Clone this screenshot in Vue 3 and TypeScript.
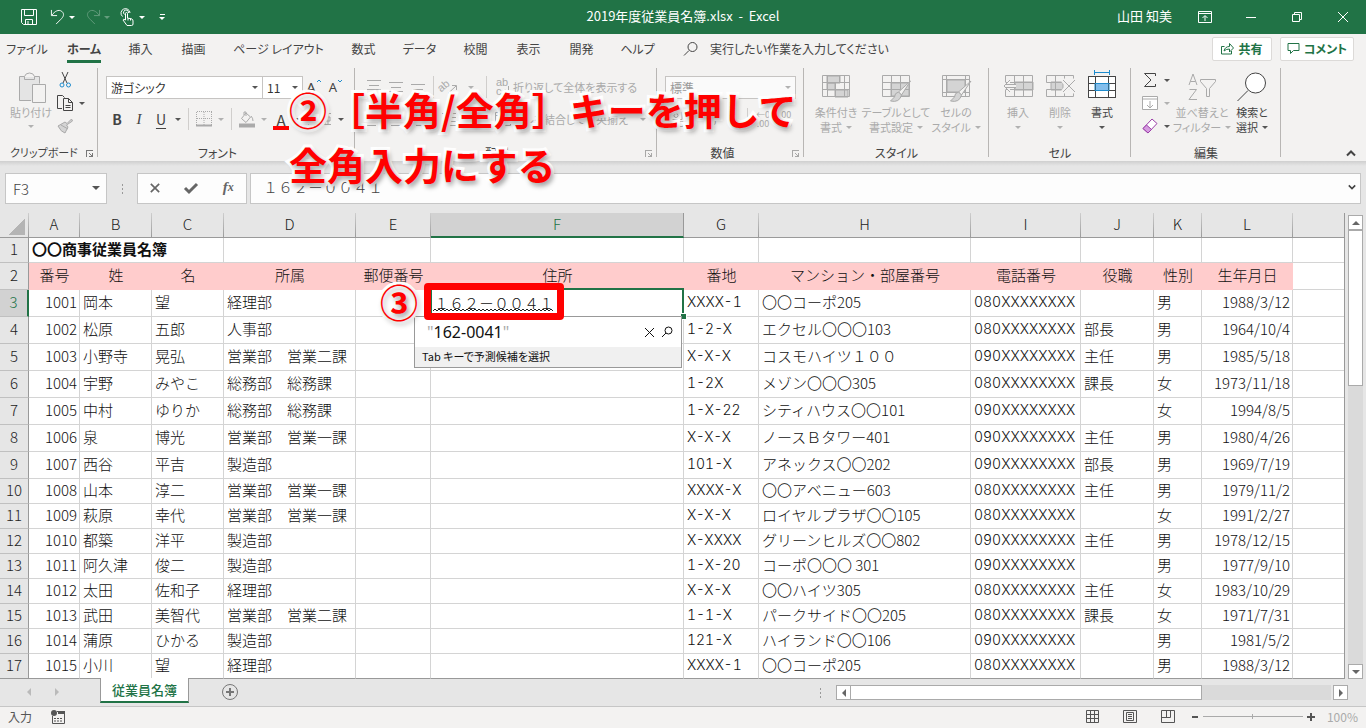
<script setup lang="ts">
import { ref } from 'vue'

interface Tab { label: string; width: number; active?: boolean }
interface Row { n: number; cells: string[] }

const tabs: Tab[] = [
  { label: 'ファイル', width: 54 },
  { label: 'ホーム', width: 60, active: true },
  { label: '挿入', width: 53 },
  { label: '描画', width: 53 },
  { label: 'ページ レイアウト', width: 117 },
  { label: '数式', width: 53 },
  { label: 'データ', width: 59 },
  { label: '校閲', width: 53 },
  { label: '表示', width: 53 },
  { label: '開発', width: 53 },
  { label: 'ヘルプ', width: 59 },
]

const columns = ['A', 'B', 'C', 'D', 'E', 'F', 'G', 'H', 'I', 'J', 'K', 'L', '']
const widths = [51, 72, 72, 132, 75, 253, 75, 212, 110, 73, 48, 91]
const headings = ['番号', '姓', '名', '所属', '郵便番号', '住所', '番地', 'マンション・部屋番号', '電話番号', '役職', '性別', '生年月日']

const source: string[][] = [
  ['1001', '岡本', '望', '経理部', 'XXXX-1', '〇〇コーポ205', '080XXXXXXXX', '', '男', '1988/3/12'],
  ['1002', '松原', '五郎', '人事部', '1-2-X', 'エクセル〇〇〇103', '080XXXXXXXX', '部長', '男', '1964/10/4'],
  ['1003', '小野寺', '晃弘', '営業部　営業二課', 'X-X-X', 'コスモハイツ１００', '090XXXXXXXX', '主任', '男', '1985/5/18'],
  ['1004', '宇野', 'みやこ', '総務部　総務課', '1-2X', 'メゾン〇〇〇305', '080XXXXXXXX', '課長', '女', '1973/11/18'],
  ['1005', '中村', 'ゆりか', '総務部　総務課', '1-X-22', 'シティハウス〇〇101', '090XXXXXXXX', '', '女', '1994/8/5'],
  ['1006', '泉', '博光', '営業部　営業一課', 'X-X-X', 'ノースＢタワー401', '090XXXXXXXX', '主任', '男', '1980/4/26'],
  ['1007', '西谷', '平吉', '製造部', '101-X', 'アネックス〇〇202', '090XXXXXXXX', '部長', '男', '1969/7/19'],
  ['1008', '山本', '淳二', '営業部　営業一課', 'XXXX-X', '〇〇アベニュー603', '080XXXXXXXX', '主任', '男', '1979/11/2'],
  ['1009', '萩原', '幸代', '営業部　営業一課', 'X-X-X', 'ロイヤルプラザ〇〇105', '080XXXXXXXX', '', '女', '1991/2/27'],
  ['1010', '都築', '洋平', '製造部', 'X-XXXX', 'グリーンヒルズ〇〇802', '090XXXXXXXX', '主任', '男', '1978/12/15'],
  ['1011', '阿久津', '俊二', '製造部', '1-X-20', 'コーポ〇〇〇 301', '090XXXXXXXX', '', '男', '1977/9/10'],
  ['1012', '太田', '佐和子', '経理部', 'X-X-X', '〇〇ハイツ305', '080XXXXXXXX', '主任', '女', '1983/10/29'],
  ['1013', '武田', '美智代', '営業部　営業二課', '1-1-X', 'パークサイド〇〇205', '080XXXXXXXX', '課長', '女', '1971/7/31'],
  ['1014', '蒲原', 'ひかる', '製造部', '121-X', 'ハイランド〇〇106', '090XXXXXXXX', '', '男', '1981/5/2'],
  ['1015', '小川', '望', '経理部', 'XXXX-1', '〇〇コーポ205', '080XXXXXXXX', '', '男', '1988/3/12'],
]
const rows: Row[] = source.map((r, i) => ({
  n: i + 3,
  cells: [...r.slice(0, 4), '', '', ...r.slice(4), ''],
}))

const cellText = ref('１６２－００４１')
const nameBox = ref('F3')
const fontName = ref('游ゴシック')
const fontSize = ref('11')
const numberFormat = ref('標準')
const zoom = ref(50)

const wave = 'M0 3' + 'l2 -2l2 2'.repeat(30)
</script>

<template>
  <div class="app">
    <header class="titlebar">
      <div class="quick">
        <button class="qbtn" aria-label="上書き保存">
          <svg width="18" height="18" viewBox="0 0 18 18"><path d="M1.5 1.5h15v15h-13l-2-2zM4.500 1.500v6h9v-6M5.500 16.500v-5h7v5M8 13v3" /></svg>
        </button>
        <button class="qbtn" aria-label="元に戻す">
          <svg width="16" height="18" viewBox="0 0 17 18"><path d="M1.500 1.500v6h6M2 7C5 3 9 .5 12.500 3C16 6 14 9 11.500 11.500L6.500 16.500" /></svg>
        </button>
        <i class="caret light"></i>
        <button class="qbtn dim" aria-label="やり直し">
          <svg width="16" height="18" viewBox="0 0 17 18"><path d="M15.500 1.500v6h-6M15 7C12 3 8 .5 4.500 3C1 6 3 9 5.500 11.500L10.500 16.500" /></svg>
        </button>
        <i class="caret light dim"></i>
        <button class="qbtn touch" aria-label="タッチ/マウス モード">
          <svg width="14" height="18" viewBox="0 0 14 18"><path d="M2.500 8.500A4.500 4.500 0 1 1 10 5M4.500 6.500A2.500 2.500 0 1 1 8.500 5M5.500 12V5.500a1 1 0 0 1 2 0v4.500l4.500 1q1 .5 1 2v3q0 1.500-1.500 1.500H7L3 12q0-1.500 2.500 0M8 10v2.500M10.500 10.500v2" /></svg>
        </button>
        <i class="caret light"></i>
        <button class="qbtn more" aria-label="クイック アクセス ツール バーのユーザー設定"><i class="bar"></i><i class="caret light"></i></button>
      </div>
      <h1 class="doc">2019年度従業員名簿.xlsx&nbsp; -&nbsp; Excel</h1>
      <div class="winctl">
        <span class="user">山田 知美</span>
        <button class="wbtn" aria-label="リボンの表示オプション"><svg width="14" height="12" viewBox="0 0 14 12"><path d="M.5 .5h13v11h-13zM.5 2.500h13M7 10V5M4.500 7L7 4.500L9.500 7" /></svg></button>
        <button class="wbtn" aria-label="最小化"><svg width="12" height="12" viewBox="0 0 12 12"><path d="M1 6.500h10" /></svg></button>
        <button class="wbtn" aria-label="元に戻す"><svg width="12" height="12" viewBox="0 0 12 12"><path d="M1.500 3.500h7v7h-7zM3.500 3.500v-2h7v7h-2" /></svg></button>
        <button class="wbtn" aria-label="閉じる"><svg width="12" height="12" viewBox="0 0 12 12"><path d="M1 1l10 10M11 1L1 11" /></svg></button>
      </div>
    </header>

    <nav class="tabs">
      <button v-for="t in tabs" :key="t.label" class="tab" :class="{ active: t.active }" :style="{ width: t.width + 'px' }"><span>{{ t.label }}</span></button>
      <button class="tell">
        <svg width="16" height="16" viewBox="0 0 16 16"><circle cx="9.500" cy="6" r="4.500" /><path d="M6 9.500L1 14.500" /></svg>
        <span>実行したい作業を入力してください</span>
      </button>
      <button class="pill share">
        <svg width="13" height="13" viewBox="0 0 13 13"><path d="M3.500 4.500h-3v7.500h10v-3M3 9q1-4.500 5.500-4.500v-3l4 4.500l-4 4v-3Q5 7 3 9z" /></svg>共有
      </button>
      <button class="pill comment">
        <svg width="13" height="13" viewBox="0 0 13 13"><path d="M1 1.500h11v7H6.500L3.500 11.500v-3H1z" /></svg>コメント
      </button>
    </nav>

    <div class="ribbon">
      <section class="group clip">
        <div class="body">
          <button class="big off">
            <svg width="30" height="32" viewBox="0 0 30 32"><path class="soft" d="M3 5h21v24H3z" /><path d="M15 28.500H3.500v-24h5q1-3.500 5-3.500t5 3.500h5v7M8.500 4.500v3h10v-3" /><path class="paper" d="M16.500 12.500h13v18h-13z" /></svg>
            <span>貼り付け</span><i class="caret"></i>
          </button>
          <div class="stack">
            <div class="line"><button class="btn" aria-label="切り取り"><svg width="16" height="18" viewBox="0 0 16 18"><path d="M5 1L10 12M11 1L6 12" /><circle class="blue" cx="5" cy="14" r="2" /><circle class="blue" cx="11.500" cy="14" r="2" /></svg></button></div>
            <div class="line"><button class="btn" aria-label="コピー"><svg width="18" height="18" viewBox="0 0 18 18"><path d="M6 14.500H1.500v-13h5l2 2M7.500 4.500h5l4 4v8h-9zM12.500 4.500v4h4M9.500 11.500h5M9.500 13.500h5" /></svg></button><i class="caret wide"></i></div>
            <div class="line"><button class="btn off" aria-label="書式のコピー/貼り付け"><svg width="16" height="16" viewBox="0 0 16 16"><path class="fillsoft" d="M14.500 1L10 5.500L8 4L1 8q3 6 7 7l3-6l-1.500-2L15.500 3z" /><path d="M4 7l7 4" /></svg></button></div>
          </div>
        </div>
        <div class="caption"><span>クリップボード</span><i class="launch"></i></div>
      </section>

      <section class="group font">
        <div class="body rows">
          <div class="line">
            <label class="combo fname"><select v-model="fontName" aria-label="フォント"><option>游ゴシック</option></select><i class="caret"></i></label>
            <label class="combo fsize"><select v-model="fontSize" aria-label="フォント サイズ"><option>11</option></select><i class="caret"></i></label>
            <button class="btn grow" aria-label="フォント サイズの拡大">A<svg width="6" height="6" viewBox="0 0 6 6"><path class="blue" d="M1 4L3 2l2 2" /></svg></button>
            <button class="btn grow small" aria-label="フォント サイズの縮小">A<svg width="6" height="6" viewBox="0 0 6 6"><path class="blue" d="M1 2l2 2L5 2" /></svg></button>
          </div>
          <div class="line">
            <button class="btn bold">B</button><button class="btn ital">I</button><button class="btn under">U</button><i class="caret wide"></i>
            <i class="sep"></i>
            <button class="btn off" aria-label="罫線"><svg width="16" height="16" viewBox="0 0 16 16"><path stroke-dasharray="1 1" d="M.5 1v13M8 1v13M15.500 1v13M1 .5h15M1 7.500h15" /><path d="M0 14.500h16" stroke-width="2" /></svg></button><i class="caret wide off"></i>
            <i class="sep"></i>
            <button class="btn off" aria-label="塗りつぶしの色"><svg width="16" height="17" viewBox="0 0 16 17"><path d="M7 2L2.500 7.500L7 11.500L11.500 6zM5 4V1h2v4M12 5q2 2 2 5" /><path d="M0 14.500h16" stroke-width="4" /></svg></button><i class="caret wide off"></i>
            <button class="btn color" aria-label="フォントの色">A</button><i class="caret wide"></i>
            <i class="sep"></i>
            <button class="btn off kana" aria-label="ふりがなの表示"><svg width="14" height="14" viewBox="0 0 14 14"><path d="M5 1.500h9M5 12.500h9M8 1.500v11M11 1.500v11M6 5v4h7V5z" /></svg></button><i class="caret wide"></i>
          </div>
        </div>
        <div class="caption"><span>フォント</span></div>
      </section>

      <section class="group align">
        <div class="body rows">
          <div class="line">
            <button class="btn off" aria-label="上揃え"><svg width="14" height="16" viewBox="0 0 14 16"><path d="M0 1.500h14M2 6.500h10M0 10.500h14" /></svg></button>
            <button class="btn off" aria-label="上下中央揃え"><svg width="14" height="16" viewBox="0 0 14 16"><path d="M0 3.500h14M2 8.500h10M0 12.500h14" /></svg></button>
            <button class="btn off" aria-label="下揃え"><svg width="14" height="16" viewBox="0 0 14 16"><path d="M0 5.500h14M2 10.500h10M0 14.500h14" /></svg></button>
            <i class="sep"></i>
            <button class="btn off turn" aria-label="方向"><svg width="18" height="16" viewBox="0 0 18 16"><text x="-1" y="10" transform="rotate(-40 5 9)">ab</text><path d="M8 14.500L16 7M12 6.500h4.500V11" /></svg></button><i class="caret turnc off"></i>
            <i class="sep"></i>
            <button class="btn wrap off"><svg width="16" height="18" viewBox="0 0 16 18"><text x="1" y="8">ab</text><text x="1" y="17">c</text><path d="M13.500 8v5h-5M10.500 11l-2 2l2 2" /></svg>折り返して全体を表示する</button>
          </div>
          <div class="line">
            <button class="btn off" aria-label="左揃え"><svg width="14" height="14" viewBox="0 0 14 14"><path d="M0 1.500h14M0 5.500h9M0 9.500h14M0 13.500h9" /></svg></button>
            <button class="btn off" aria-label="中央揃え"><svg width="14" height="14" viewBox="0 0 14 14"><path d="M0 1.500h14M2 5.500h10M0 9.500h14M2 13.500h10" /></svg></button>
            <button class="btn off" aria-label="右揃え"><svg width="14" height="14" viewBox="0 0 14 14"><path d="M0 1.500h14M5 5.500h9M0 9.500h14M5 13.500h9" /></svg></button>
            <i class="sep"></i>
            <button class="btn off" aria-label="インデントを減らす"><svg width="14" height="14" viewBox="0 0 14 14"><path d="M0 1.500h14M6 5.500h8M6 9.500h8M0 13.500h14M4 5L1.500 7.500L4 10" /></svg></button>
            <button class="btn off" aria-label="インデントを増やす"><svg width="14" height="14" viewBox="0 0 14 14"><path d="M0 1.500h14M6 5.500h8M6 9.500h8M0 13.500h14M1 5l2.500 2.500L1 10" /></svg></button>
            <i class="sep"></i>
            <button class="btn wrap off"><svg width="16" height="16" viewBox="0 0 16 16"><path d="M.5 1.500h15v13H.5zM.5 4.500h15M.5 11.500h15M8 1.500v3M8 11.500v3M3 8h10" /></svg>セルを結合して中央揃え</button><i class="caret end off"></i>
          </div>
        </div>
        <div class="caption"><span>配置</span><i class="launch off"></i></div>
      </section>

      <section class="group number">
        <div class="body rows">
          <div class="line"><label class="combo nfmt off"><select v-model="numberFormat" aria-label="表示形式"><option>標準</option></select><i class="caret"></i></label></div>
          <div class="line">
            <button class="btn off" aria-label="通貨表示形式"><svg width="16" height="16" viewBox="0 0 16 16"><path d="M2 .5h12v8H2z" /><circle cx="8" cy="4.500" r="2" /><path d="M6 10.500h9v5H6z" /></svg></button><i class="caret wide off"></i>
            <button class="btn off pct">%</button><button class="btn off pct">,</button>
            <i class="sep"></i>
            <button class="btn off dec">←0<br>.00</button><button class="btn off dec">.00<br>→0</button>
          </div>
        </div>
        <div class="caption"><span>数値</span><i class="launch off"></i></div>
      </section>

      <section class="group styles">
        <div class="body">
          <button class="big off">
            <svg width="30" height="32" viewBox="0 0 30 32"><path class="fillsoft" d="M6 4h13v7H6zM6 11h8v7H6zM14 18h13v7H14z" /><path d="M1.500 3.500h27v21h-27zM1.500 10.500h27M1.500 17.500h27M6.500 3.500v21M23.500 3.500v21M18.500 3.500v7M14.500 10.500v14" /></svg>
            <span>条件付き</span><span>書式<i class="caret"></i></span>
          </button>
          <button class="big off">
            <svg width="30" height="32" viewBox="0 0 30 32"><path class="fillsoft" d="M10 11h18v13H10z" /><path d="M1.500 3.500h27v21h-27zM1.500 10.500h27M1.500 17.500h27M10.500 3.500v21M19.500 3.500v21" /><path class="paper" d="M29.500 9L17.500 20l3 3z" /><path class="fillsoft" d="M17.500 20q-4 1-4 5l-4 4q9 2 11-6z" /></svg>
            <span>テーブルとして</span><span>書式設定<i class="caret"></i></span>
          </button>
          <button class="big off">
            <svg width="30" height="32" viewBox="0 0 30 32"><path class="fillsoft" d="M6 8h18v12H6z" /><path d="M1.500 3.500h27v21h-27zM1.500 7.500h27M1.500 20.500h27M5.500 3.500v21M24.500 3.500v21" /><path class="paper" d="M30 9L17.500 20l3 3z" /><path class="fillsoft" d="M17.500 20q-4 1-4 5l-4 4q9 2 11-6z" /></svg>
            <span>セルの</span><span>スタイル<i class="caret"></i></span>
          </button>
        </div>
        <div class="caption"><span>スタイル</span></div>
      </section>

      <section class="group cellsg">
        <div class="body">
          <button class="big off">
            <svg width="32" height="32" viewBox="0 0 32 32"><path class="fillsoft" d="M13 10h18v8H13z" /><path d="M3.500 10V3.500h27v21h-27V18M3.500 10.500h27M3.500 17.500h27M12.500 3.500v21M21.500 3.500v21" /><path class="paper" d="M8 8l-6 6l6 6v-4h6v-4H8z" stroke="none" /><path d="M14 12.500H4M14 15.500H4M8 8l-6 6l6 6" /></svg>
            <span>挿入</span><span><i class="caret"></i></span>
          </button>
          <button class="big off">
            <svg width="32" height="32" viewBox="0 0 32 32"><path class="fillsoft" d="M7 10h12v8H7z" /><path d="M2.500 10.500v-7h27v7zM2.500 24.500v-7h27v7zM11.500 3.500v21M20.500 3.500v7M20.500 17.500v7" /><path class="halo" d="M19 8l12 12M31 8L19 20" /><path d="M19 8l12 12M31 8L19 20" /></svg>
            <span>削除</span><span><i class="caret"></i></span>
          </button>
          <button class="big">
            <svg width="30" height="32" viewBox="0 0 30 32"><path class="white" d="M1.500 4.500h27v21h-27z" /><path class="cellblue" d="M8 11h14v7H8z" /><path d="M1.500 4.500h27v21h-27zM1.500 11.500h27M1.500 18.500h27M8.500 4.500v21M21.500 4.500v21" /><path class="blue" d="M8 11.500h14v7H8zM7.500 .500h15M7.500 -2v5M22.500 -2v5" /></svg>
            <span>書式</span><span><i class="caret"></i></span>
          </button>
        </div>
        <div class="caption"><span>セル</span></div>
      </section>

      <section class="group edit">
        <div class="body">
          <div class="stack">
            <div class="line"><button class="btn" aria-label="オート SUM"><svg width="14" height="16" viewBox="0 0 14 16"><path d="M12.500 4V1.500h-11L8 8l-6.500 6.500h11V12" /></svg></button><i class="caret wide"></i></div>
            <div class="line"><button class="btn off" aria-label="フィル"><svg width="16" height="16" viewBox="0 0 16 16"><path class="white" d="M.5 1.500h15v13H.5z" /><path d="M.5 4h15M8 6v6.500M5 10l3 3l3-3" /></svg></button><i class="caret wide off"></i></div>
            <div class="line"><button class="btn" aria-label="クリア"><svg width="16" height="16" viewBox="0 0 16 16"><path class="eraser" d="M1 10.500L10 1l5 4.500L6 15z" /><path class="eraserfill" d="M1 10.500L4.500 7l5 4.500L6 15z" /></svg></button><i class="caret wide"></i></div>
          </div>
          <button class="big sort off">
            <svg width="30" height="32" viewBox="0 0 30 32"><path d="M2 13L6 2l4 11M3.500 9.500h5M2.500 17.500h7L2 27.500h8M13.500 7.500h15v2l-6 7v8h-3v-8l-6-7z" /></svg>
            <span>並べ替えと</span><span>フィルター<i class="caret"></i></span>
          </button>
          <button class="big find">
            <svg width="30" height="32" viewBox="0 0 30 32"><circle class="white" cx="18.500" cy="11" r="10" /><path d="M11 18.500L.5 29" /></svg>
            <span>検索と</span><span>選択<i class="caret"></i></span>
          </button>
        </div>
        <div class="caption"><span>編集</span></div>
      </section>
      <button class="collapse" aria-label="リボンを折りたたむ"><svg width="10" height="7" viewBox="0 0 10 7"><path d="M1 5.500l4-4l4 4" stroke-width="2" /></svg></button>
    </div>

    <div class="fbar">
      <label class="namebox"><input v-model="nameBox" aria-label="名前ボックス"><i class="caret"></i></label>
      <i class="dots"></i>
      <div class="fbtns">
        <button aria-label="キャンセル"><svg width="10" height="10" viewBox="0 0 12 12"><path d="M1 1l10 10M11 1L1 11" stroke-width="2" /></svg></button>
        <button aria-label="入力"><svg width="14" height="12" viewBox="0 0 14 12"><path d="M1 6l4 4L13 2" stroke-width="3" /></svg></button>
        <button class="fx" aria-label="関数の挿入">f<sub>x</sub></button>
      </div>
      <label class="formula"><input v-model="cellText" aria-label="数式バー"><svg width="8" height="6" viewBox="0 0 10 7"><path d="M1 1.500l4 4l4-4" stroke-width="2" /></svg></label>
    </div>

    <main class="work">
      <div class="sheet">
        <table>
          <colgroup><col class="rh"><col v-for="(w, i) in widths" :key="i" :style="{ width: w + 'px' }"><col></colgroup>
          <thead>
            <tr><th class="corner"><i></i></th><th v-for="(c, i) in columns" :key="i" scope="col" :class="{ sel: c === 'F', last: c === '' }">{{ c }}</th></tr>
          </thead>
          <tbody>
            <tr class="short"><th scope="row">1</th><td colspan="3" class="title">〇〇商事従業員名簿</td><td v-for="i in 10" :key="i"></td></tr>
            <tr class="heads"><th scope="row">2</th><td v-for="h in headings" :key="h">{{ h }}</td><td class="plain"></td></tr>
            <tr v-for="r in rows" :key="r.n" :class="{ short: r.n > 9 }">
              <th scope="row" :class="{ sel: r.n === 3 }">{{ r.n }}</th>
              <td v-for="(c, i) in r.cells" :key="i" :class="{ num: i === 0 || i === 11, latin: i === 6 || i === 8, editing: r.n === 3 && i === 5 }">
                <div v-if="r.n === 3 && i === 5" class="editor">
                  <input v-model="cellText" aria-label="F3">
                  <svg class="wave" width="120" height="4" viewBox="0 0 120 4"><path :d="wave" /></svg>
                  <i class="handle"></i>
                  <div class="suggest">
                    <div class="cand"><q>"</q><span>162-0041</span><q>"</q>
                      <button aria-label="閉じる"><svg width="11" height="11" viewBox="0 0 11 11"><path d="M1 1l9 9M10 1L1 10" /></svg></button>
                      <button aria-label="検索"><svg width="12" height="12" viewBox="0 0 12 12"><circle cx="7.500" cy="4.500" r="3.500" /><path d="M5 7L1 11" /></svg></button>
                    </div>
                    <div class="hint">Tab キーで予測候補を選択</div>
                  </div>
                  <i class="redbox"></i>
                  <b class="mark three">③</b>
                </div>
                <template v-else>{{ c }}</template>
              </td>
            </tr>
          </tbody>
        </table>
      </div>
      <div class="vscroll">
        <button aria-label="上へスクロール"><i class="tri up"></i></button><div class="vthumb"></div><div class="vtrack"></div><button aria-label="下へスクロール"><i class="tri down"></i></button>
      </div>
    </main>

    <div class="sheetbar">
      <button class="navb" aria-label="前のシート"><i class="tri left"></i></button>
      <button class="navb" aria-label="次のシート"><i class="tri right"></i></button>
      <button class="stab">従業員名簿</button>
      <button class="add" aria-label="新しいシート"><svg width="16" height="16" viewBox="0 0 16 16"><circle cx="8" cy="8" r="7.500" /><path d="M8 4v8M4 8h8" stroke-width="2" /></svg></button>
      <i class="dots"></i>
      <div class="hscroll">
        <button aria-label="左へスクロール"><i class="tri left"></i></button><div class="hthumb"></div><div class="htrack"></div><button aria-label="右へスクロール"><i class="tri right"></i></button>
      </div>
    </div>

    <footer class="status">
      <span>入力</span>
      <button aria-label="マクロの記録"><svg width="14" height="14" viewBox="0 0 14 14"><path d="M1.500 6v7.500h12v-12H6M7 3h6" /><path d="M3 8.500h9M3 11h9" stroke-width="1" stroke-dasharray="2 1" /><path d="M7 2.500h7" stroke-width="3" /><circle cx="3" cy="3" r="3" class="dot" /></svg></button>
      <div class="right">
        <button aria-label="標準"><svg width="13" height="13" viewBox="0 0 13 13"><path d="M.5 .5h12v12H.5zM.5 4.500h12M.5 8.500h12M4.500 .5v12M8.500 .5v12" /></svg></button>
        <button aria-label="ページ レイアウト"><svg width="14" height="13" viewBox="0 0 14 13"><path d="M.5 .5h13v12H.5zM3.500 2.500h7v8h-7zM5 4.500h4M5 6.500h4M5 8.500h4" /></svg></button>
        <button aria-label="改ページ プレビュー"><svg width="14" height="13" viewBox="0 0 14 13"><path d="M.5 .5h13v12H.5zM5.500 .5v7M9.500 .5v7M.5 7.500h9" /></svg></button>
        <button class="zb" aria-label="縮小"><svg width="8" height="8" viewBox="0 0 8 8"><path d="M1 4h6" stroke-width="2" /></svg></button>
        <input v-model="zoom" class="zoom" type="range" min="0" max="100" aria-label="ズーム">
        <button class="zb" aria-label="拡大"><svg width="8" height="8" viewBox="0 0 8 8"><path d="M0 4h8M4 0v8" stroke-width="2" /></svg></button>
        <span class="pc">100%</span>
      </div>
    </footer>

    <p class="mark note">②［半角/全角］キーを押して<br>全角入力にする</p>
  </div>
</template>

<style>
html, body { margin: 0; background: #e6e6e6; }
</style>

<style scoped>
.app { position: relative; min-height: 100vh; display: flex; flex-direction: column; background: #e6e6e6; color: #444; font: 13px/18px "Noto Sans CJK JP", "Noto Sans", sans-serif; font-feature-settings: "palt"; overflow: hidden; }
*, *::before, *::after { box-sizing: border-box; }
button, input, select { font: inherit; font-feature-settings: inherit; color: inherit; background: none; border: 0; padding: 0; margin: 0; border-radius: 0; }
button { display: flex; align-items: center; justify-content: center; white-space: nowrap; }
svg { fill: none; stroke: currentColor; flex: none; overflow: visible; }
svg text { font: 11px "Liberation Sans", sans-serif; fill: currentColor; stroke: none; }
i { font-style: normal; flex: none; }
.caret { display: inline-block; width: 0; border: 3px solid transparent; border-top-color: #555; border-bottom: 0; }
.caret.wide { margin: 0 3px; }
.caret.light { border-top-color: #fff; }
.off { color: #aaa; }
.off .caret, .caret.off { border-top-color: #b1b1b1; }
.soft, .fillsoft { fill: #d4d4d4; }
.soft { stroke: none; fill: #e4e4e4; }
.paper { fill: #f3f2f1; }
.white { fill: #fff; }
.blue { stroke: #1e8bcd; }
.cellblue { fill: #83beec; stroke: none; }
.halo { stroke: #f3f2f1; stroke-width: 5; }
.eraser { fill: #fff; stroke: #9b3fa8; }
.eraserfill { fill: #d59be0; stroke: #9b3fa8; }

.titlebar { display: grid; grid-template-columns: 1fr auto 1fr; align-items: center; height: 34px; background: #217346; color: #fff; }
.quick { display: flex; align-items: center; padding-left: 20px; }
.qbtn { height: 34px; margin-right: 3px; }
.qbtn:first-child { margin-right: 12px; }
.quick > .caret { margin-right: 10px; }
.quick .dim { opacity: .3; }
.touch { margin-right: 5px; }
.more { flex-direction: column; gap: 2px; margin-left: 4px; }
.more .bar { width: 5px; height: 1px; background: #fff; }
.doc { margin: 0; font-size: 13px; font-weight: 400; line-height: 18px; padding-bottom: 2px; }
.winctl { display: flex; justify-content: flex-end; align-items: center; }
.user { margin-right: 10px; padding-bottom: 2px; }
.wbtn { width: 46px; height: 34px; }

.tabs { display: flex; align-items: center; height: 30px; background: #f3f2f1; padding-right: 12px; font-size: 12px; }
.tab { height: 30px; }
.tab span { height: 28px; line-height: 28px; }
.tab.active { font-weight: 700; }
.tab.active span { border-bottom: 3px solid #217346; }
.tell { margin: 0 auto 0 16px; gap: 11px; height: 28px; }
.pill { height: 24px; margin-top: -1px; background: #fff; border: 1px solid #dcdad8; border-radius: 2px; color: #217346; font-weight: 700; gap: 4px; }
.share { width: 60px; margin-right: 8px; }
.comment { width: 74px; }

.ribbon { display: flex; height: 97px; background: #f3f2f1; font-size: 11px; line-height: 15px; }
.group { position: relative; flex: none; }
.group::after { content: ""; position: absolute; right: 0; top: 4px; bottom: 4px; width: 1px; background: #b8b6b4; }
.body { display: flex; height: 80px; padding-left: 8px; }
.rows { flex-direction: column; gap: 10px; padding-top: 12px; }
.caption { display: flex; align-items: center; justify-content: center; height: 17px; position: relative; font-size: 12px; }
.launch { position: absolute; right: 5px; top: 6px; width: 7px; height: 7px; border-left: 1px solid #777; border-top: 1px solid #777; }
.launch::after { content: ""; position: absolute; right: 0; bottom: 0; width: 4px; height: 4px; border-right: 1px solid #777; border-bottom: 1px solid #777; background: linear-gradient(45deg, transparent 40%, #777 40% 60%, transparent 60%); }
.launch.off { opacity: .6; }
.clip { width: 98px; }
.clip .caption { justify-content: flex-start; padding-left: 10px; font-size: 11px; }
.font { width: 257px; }
.font .caption { padding-right: 18px; }
.align { width: 302px; }
.align .caption { padding-right: 18px; }
.number { width: 147px; }
.number .caption { padding-right: 16px; }
.styles { width: 185px; }
.styles .body { padding-left: 2px; }
.cellsg { width: 142px; }
.edit { width: 150px; }
.line { display: flex; align-items: center; height: 22px; }
.stack { display: flex; flex-direction: column; gap: 1px; padding-top: 5px; }
.btn { width: 22px; height: 22px; flex: none; }
.sep { width: 1px; height: 22px; margin: 0 4px; background: #d0cecc; }
.big { flex-direction: column; justify-content: flex-start; width: 60px; padding-top: 8px; }
.big svg { margin-bottom: 1px; }
.big span { height: 15px; display: flex; align-items: center; gap: 4px; }
.clip .big { width: 46px; }
.clip .big .caret { margin-top: 5px; }
.cellsg .big, .find { width: 42px; }
.sort { width: 58px; }
.combo { position: relative; display: flex; height: 23px; background: #fff; border: 1px solid #c6c4c2; color: #333; }
.combo select { appearance: none; width: 100%; padding: 0 4px; font-size: 12px; }
.combo .caret { position: absolute; right: 4px; top: 9px; }
.combo.off { color: #999; background: #fafafa; }
.fname { width: 157px; }
.fsize { width: 41px; margin-left: -1px; }
.nfmt { width: 131px; }
.grow { font-size: 15px; align-items: center; font-family: "Noto Sans", sans-serif; }
.grow svg { align-self: flex-start; margin-top: 2px; }
.grow.small { font-size: 13px; }
.bold { font-weight: 700; font-size: 14px; }
.ital { font: italic 15px "Liberation Serif", serif; }
.under { font-size: 14px; text-decoration: underline; text-underline-offset: 3px; }
.color { font-size: 15px; line-height: 17px; background: linear-gradient(#f00, #f00) center bottom / 16px 4px no-repeat; }
.turn { width: 22px; }
.turnc { margin: 0 8px; }
.wrap { width: auto; gap: 2px; padding-left: 4px; }
.end { margin-left: 12px; }
.pct { font-size: 14px; }
.dec { font-size: 9px; line-height: 9px; }
.collapse { margin-left: auto; align-self: flex-end; width: 30px; height: 16px; }

.fbar { display: flex; height: 52px; padding: 12px 5px 9px; background: linear-gradient(#cfcfcf, #e6e6e6 5px); }
.namebox, .fbtns, .formula { display: flex; align-items: center; background: #fdfdfd; border: 1px solid #c6c6c6; }
.namebox { width: 102px; padding: 1px 6px 0 7px; font-size: 15px; font-weight: 300; }
.namebox input { width: 100%; min-width: 0; }
.namebox .caret { border-width: 4px 4px 0; margin-bottom: 2px; }
.dots { width: 3px; height: 11px; align-self: center; background: radial-gradient(circle, #999 1px, transparent 1px) 0 0 / 3px 4px; }
.fbar .dots { margin: 0 13px 0 14px; }
.fbtns { width: 110px; justify-content: space-around; color: #666; padding-bottom: 2px; }
.fx { font: italic 700 15px "Liberation Serif", serif; }
.fx sub { font-size: 12px; }
.formula { flex: 1; margin-left: 3px; padding: 0 4px 3px 12px; font-size: 15px; font-weight: 300; font-feature-settings: normal; }
.formula input { flex: 1; min-width: 0; }

.work { display: flex; color: #222; font-size: 15px; font-feature-settings: normal; font-weight: 300; }
.sheet { flex: 1; min-width: 0; }
table { width: 100%; table-layout: fixed; border-collapse: separate; border-spacing: 0; border-right: 1px solid #999; }
.rh { width: 29px; }
th { font-weight: 300; padding: 0 0 2px; height: 27px; line-height: 20px; background: #e6e6e6; border-right: 1px solid #999; border-bottom: 1px solid #c0c0c0; }
thead th { height: 25px; border-right: 1px solid; border-image: linear-gradient(#d0d0d0, #999) 1; border-bottom: 1px solid #999; }
th.last { border-right: 0; }
thead th.sel { background: #d2d2d2; color: #217346; border-image: none; border-right-color: #999; border-bottom: 2px solid #217346; }
tbody th.sel { background: #d2d2d2; color: #217346; border-right: 2px solid #217346; }
.corner i { display: block; width: 17px; height: 17px; margin: 4px 0 0 8px; background: linear-gradient(135deg, transparent 50%, #b4b4b4 50%); }
td { height: 27px; padding: 0 2px 2px 3px; line-height: 20px; background: #fff; border-right: 1px solid #d4d4d4; border-bottom: 1px solid #d4d4d4; white-space: pre; color: #111; }
.short th, .short td { height: 25px; }
.title { font-weight: 700; }
.heads td { text-align: center; background: #fcc; border-color: #fcc; }
.heads .plain { background: #fff; border-color: #d4d4d4; }
tr td:last-child { border-right: 0; }
tbody tr:last-child th, tbody tr:last-child td { border-bottom-color: #999; }
.num { text-align: right; }
.latin { font-family: Inter, "Noto Sans CJK JP", sans-serif; font-size: 14px; font-variant-numeric: tabular-nums; }
td.editing { padding: 0; overflow: visible; }
.editor { position: relative; height: 26px; }
.editor::before { content: ""; position: absolute; inset: -2px -1px -2px -1px; border: 2px solid #217346; }
.editor input { position: relative; width: 100%; height: 24px; padding-left: 3px; }
.wave { position: absolute; left: 2px; bottom: 4px; stroke: #222; }
.handle { position: absolute; right: -3px; bottom: -3px; width: 5px; height: 5px; background: #217346; outline: 1px solid #fff; }
.suggest { position: absolute; left: -17px; top: 26px; width: 268px; z-index: 3; background: #fff; border: 1px solid #999; }
.cand { display: flex; align-items: center; height: 30px; padding: 0 5px 0 12px; font: 16px/20px "Noto Sans", sans-serif; color: #111; }
.cand q { quotes: none; color: #aaa; }
.cand button { width: 18px; height: 18px; }
.cand q + button { margin-left: auto; }
.hint { background: #f0f0f0; height: 20px; padding-left: 7px; font-size: 11px; line-height: 18px; font-weight: 400; font-feature-settings: "palt"; }
.redbox { position: absolute; z-index: 4; left: -7px; top: -7px; width: 140px; height: 37px; border: 7px solid #f00; border-radius: 4px; }
.mark { position: absolute; z-index: 5; margin: 0; color: #f00; font: 700 38px/55px "Noto Sans CJK JP", sans-serif; font-feature-settings: normal; white-space: nowrap; -webkit-text-stroke: 6px #fff; paint-order: stroke fill; text-shadow: 2px 3px 5px rgba(0, 0, 0, .4); pointer-events: none; }
.three { left: -51px; top: -17px; }
.note { left: 289px; top: 81px; }

.vscroll { display: flex; flex-direction: column; width: 21px; padding: 2px 3px 0; }
.vscroll button, .hscroll button { width: 15px; height: 15px; flex: none; background: #fff; border: 1px solid #aaa; }
.vthumb { height: 156px; background: #fff; border: 1px solid #aaa; }
.vtrack { flex: 1; background: #dadada; }
.tri { border: 4px solid transparent; width: 0; }
.up { border-bottom-color: #666; border-top: 0; }
.down { border-top-color: #666; border-bottom: 0; }
.left { border-right-color: #666; border-left: 0; }
.right { border-left-color: #666; border-right: 0; }

.sheetbar { display: flex; align-items: flex-start; height: 27px; padding-right: 18px; }
.navb { width: 28px; height: 25px; opacity: .35; }
.navb:first-child { margin-left: 15px; }
.stab { width: 89px; height: 25px; margin: -1px 33px 0 29px; background: #fff; border: 1px solid #999; border-top: 0; border-bottom: 2px solid #217346; color: #217346; font-weight: 500; position: relative; }
.add { height: 26px; color: #777; }
.sheetbar .dots { margin: 0 14px 0 auto; }
.hscroll { display: flex; width: 512px; padding-top: 6px; }
.hthumb { width: 352px; height: 15px; background: #fff; border: 1px solid #aaa; margin-left: -1px; }
.htrack { flex: 1; height: 15px; background: #dadada; margin-right: 2px; }

.status { display: flex; align-items: center; height: 22px; padding: 0 8px 2px; background: #f3f2f1; border-top: 1px solid #c6c6c6; gap: 19px; font-size: 12px; color: #555; }
.dot { fill: #555; stroke: none; }
.status .right { display: flex; align-items: center; margin-left: auto; border: 0; gap: 24px; }
.status .zb { margin-left: -8px; }
.zoom { appearance: none; width: 100px; height: 13px; margin: 0 -12px 0 -20px; background: linear-gradient(#aaa, #aaa) center / 100% 1px no-repeat, linear-gradient(#aaa, #aaa) center / 1px 5px no-repeat; }
.zoom::-webkit-slider-thumb { appearance: none; width: 0; height: 0; }
.pc { color: #aaa; margin-left: -12px; }
</style>
